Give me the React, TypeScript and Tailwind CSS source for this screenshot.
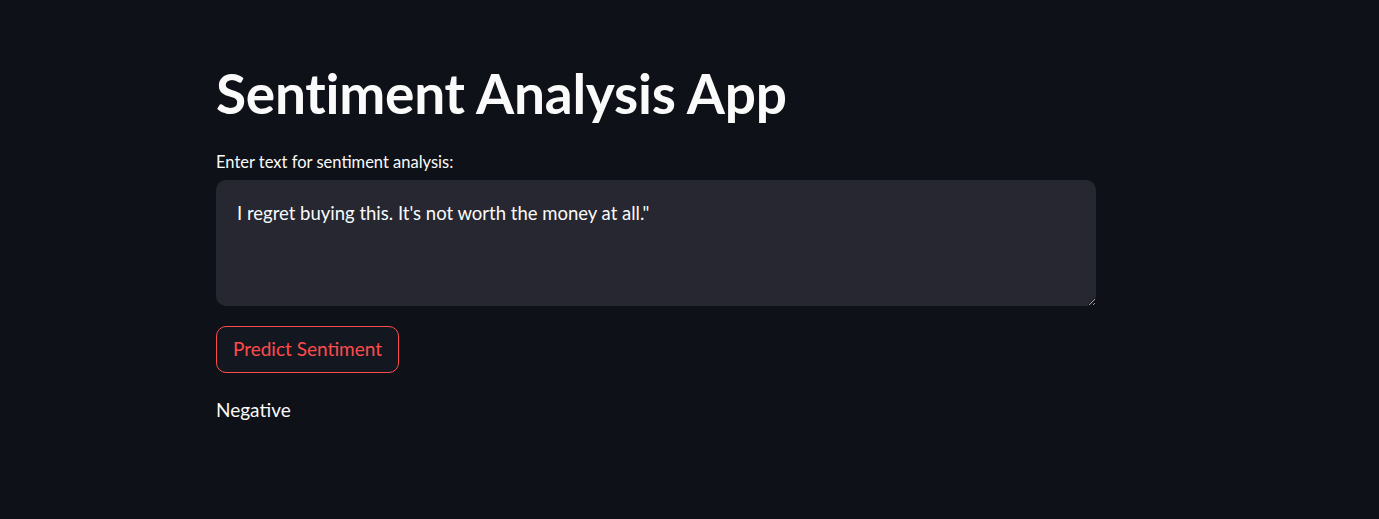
import React from 'react';

const App = () => {
  return (
    <div
      className="min-h-screen w-full bg-[#0e1117] text-[#fafafa]"
      style={{ fontFamily: 'Lato, "Open Sans", sans-serif' }}
    >
      <main className="ml-[216px] w-[880px] pt-[60px]">
        {/* page title */}
        <h1 className="text-[55px] font-bold leading-[1.2] tracking-[-0.25px] text-[#fafafa]">
          Sentiment Analysis App
        </h1>

        <label className="mt-[25px] block text-[16.5px] leading-[22px] text-[#fafafa]">
          Enter text for sentiment analysis:
        </label>

        <textarea
          className="mt-[7px] block h-[126px] w-full resize-y rounded-[10px] bg-[#262730] px-[21px] pt-[20px] pb-[16px] text-[18.5px] leading-[26px] text-[#fafafa] outline-none"
          defaultValue={`I regret buying this. It's not worth the money at all."`}
        />

        <button className="mt-[20px] flex h-[47px] w-[183px] items-center justify-center rounded-[10px] border border-[#ff4b4b] bg-[#131720] text-[19px] text-[#ff4b4b]">
          Predict Sentiment
        </button>

        <p className="mt-[24px] text-[19px] leading-[26px] text-[#fafafa]">
          Negative
        </p>
      </main>
    </div>
  );
};

export default App;
